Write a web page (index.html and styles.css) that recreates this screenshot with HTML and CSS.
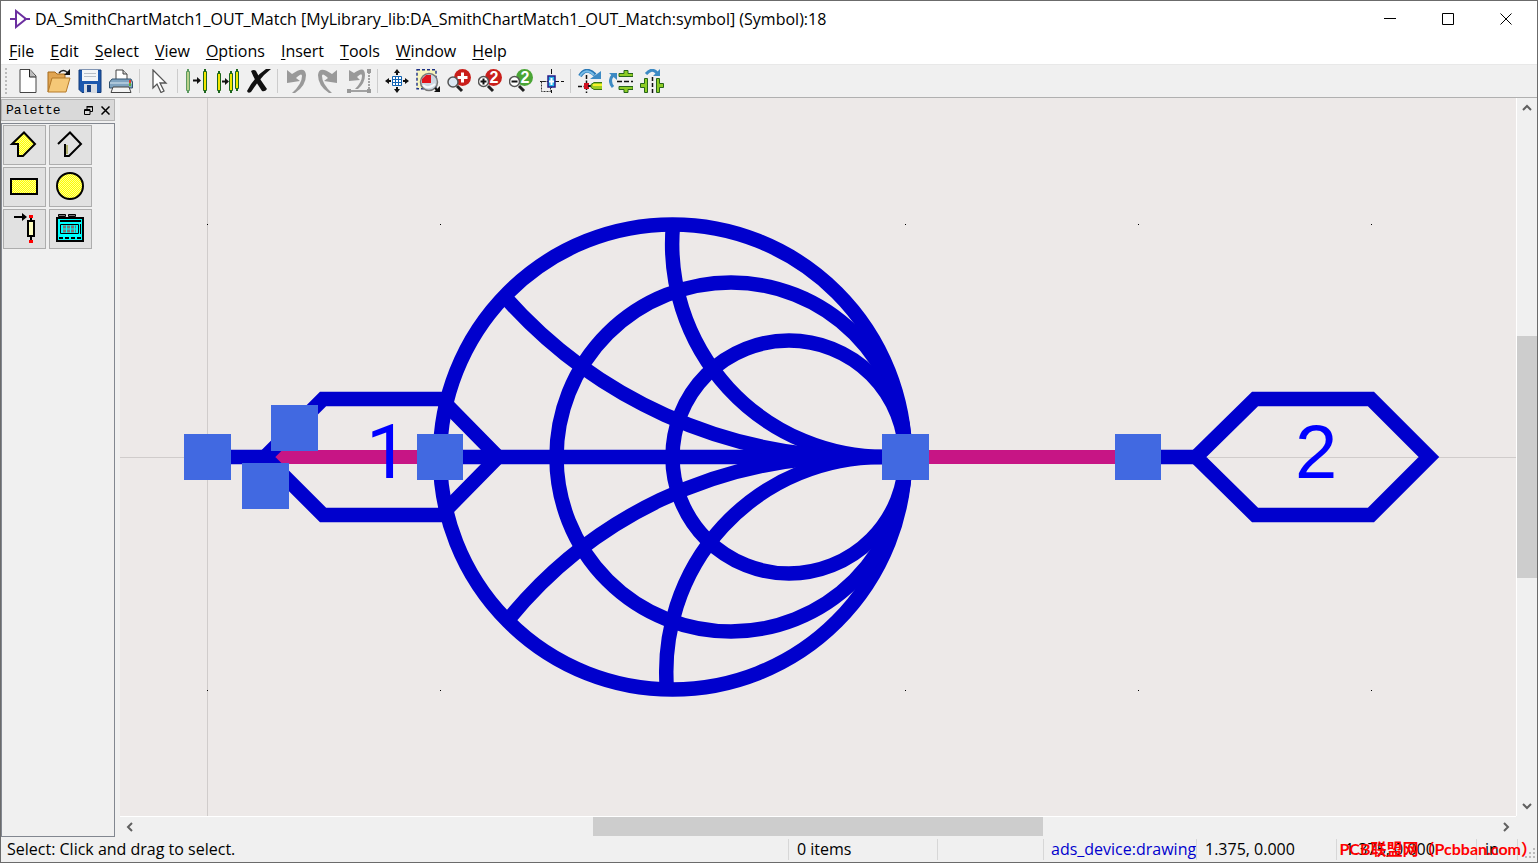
FILE: index.html
```
<!DOCTYPE html>
<html lang="en">
<head>
    <meta charset="UTF-8">
    <meta name="viewport" content="width=device-width, initial-scale=1.0">

    <title>DA_SmithChartMatch1_OUT_Match (Symbol)</title>

    <link rel="stylesheet" href="styles.css">
</head>
<body>

    <header class="title-bar">
        <svg class="app-icon" viewBox="0 0 20 20" width="20" height="20">
            <path d="M0 10h6M14 10h6M6 2v16L16 10Z" fill="none" stroke="#6b2fa0" stroke-width="2"/>
        </svg>
        <h1 class="title">DA_SmithChartMatch1_OUT_Match [MyLibrary_lib:DA_SmithChartMatch1_OUT_Match:symbol] (Symbol):18</h1>
        <div class="window-buttons">
            <button aria-label="Minimize"><svg viewBox="0 0 12 12" width="12" height="12"><path d="M0 5.5h12" stroke="#000"/></svg></button>
            <button aria-label="Maximize"><svg viewBox="0 0 12 12" width="12" height="12"><path d="M.5 .5h11v11H.5Z" fill="none" stroke="#000"/></svg></button>
            <button aria-label="Close"><svg viewBox="0 0 12 12" width="12" height="12"><path d="M.5 .5l11 11M11.5 .5l-11 11" stroke="#000"/></svg></button>
        </div>
    </header>

    <nav class="menu-bar">
        <button><u>F</u>ile</button>
        <button><u>E</u>dit</button>
        <button><u>S</u>elect</button>
        <button><u>V</u>iew</button>
        <button><u>O</u>ptions</button>
        <button><u>I</u>nsert</button>
        <button><u>T</u>ools</button>
        <button><u>W</u>indow</button>
        <button><u>H</u>elp</button>
    </nav>

    <div class="toolbar">
        <span class="grip"></span>
        <button aria-label="New">
            <svg viewBox="0 0 24 24"><path d="M4 .5h10l6 6.500V23.500H4Z" fill="#fff" stroke="#444"/><path d="M13.500 .5V8H20" fill="#bbb" stroke="#222"/></svg>
        </button>
        <button aria-label="Open">
            <svg viewBox="0 0 24 24"><path d="M1 23V3h7l2 2h8v4" fill="#e0a552" stroke="#a56a1c"/><path d="M1 23 5 9h18l-4 14Z" fill="#f5c877" stroke="#b57a2a"/><path d="M12 4q4-5 9 0" fill="none" stroke="#222" stroke-width="1.500"/><path d="M17 6h6V0Z" fill="#111"/></svg>
        </button>
        <button aria-label="Save">
            <svg viewBox="0 0 24 24"><path d="M1 1h22v22.500H4l-3-3Z" fill="#1c58ae" stroke="#123a78"/><path d="M4 1h16v11H4Z" fill="#f4f6f8"/><path d="M6 4.500h12M6 7.500h12" stroke="#b9c0c8"/><path d="M6 15h13v9H6Z" fill="#d6dbe2"/><path d="M9 16h4v7H9Z" fill="#173f82"/></svg>
        </button>
        <button aria-label="Print">
            <svg viewBox="0 0 24 24"><path d="M7 11V1h7l4 4v6" fill="#fff" stroke="#444"/><path d="M14 1v4h4" fill="#ccc" stroke="#444"/><path d="M3 10h19l1.500 3v6H.5v-6Z" fill="#7fa3c0" stroke="#33536e"/><path d="M1 14h22" stroke="#dce9f2"/><path d="M4 18h16l2 5.500H2Z" fill="#f3f3f3" stroke="#444"/><path d="M21 11v3" stroke="#d94030" stroke-width="2"/><path d="M21 14v3" stroke="#5eb030" stroke-width="2"/></svg>
        </button>
        <span class="separator"></span>
        <button aria-label="Select">
            <svg viewBox="0 0 24 24"><path d="M6 1v18l4-4 4 8.500 3-1.500-4-8h6Z" fill="#fff" stroke="#555" stroke-width="1.300"/></svg>
        </button>
        <span class="separator"></span>
        <button aria-label="Move">
            <svg viewBox="0 0 24 24"><path d="M3 0v24" stroke="#5c9a60" stroke-width="2"/><path d="M20 0v24" stroke="#1c661c" stroke-width="2"/><path d="M1.500 2.500h3v19h-3Z" fill="#b9cf88" stroke="#5c9a60"/><path d="M18.500 2.500h3v19h-3Z" fill="#f2e600" stroke="#1c661c"/><path d="M8 11.500h5" stroke="#111" stroke-width="2"/><path d="M12 8v7l4-3.500Z" fill="#111"/></svg>
        </button>
        <button aria-label="Copy">
            <svg viewBox="0 0 24 24"><path d="M3 2v22M15 2v22M21 0v22" stroke="#1c661c" stroke-width="2"/><path d="M1.500 4.500h3v17h-3ZM13.500 4.500h3v17h-3ZM19.500 2.500h3v17h-3Z" fill="#f2e600" stroke="#1c661c"/><path d="M6 12.500h4" stroke="#111" stroke-width="2"/><path d="M9 9v7l4-3.500Z" fill="#111"/></svg>
        </button>
        <button aria-label="Delete">
            <svg viewBox="0 0 24 24"><path d="M4 2q3-2 5 0 4 9 11 18-2 3-5 2Q8 12 4 2Z" fill="#111"/><path d="M24 0q-8 6-13 13L4 23q-3 2-4-1Q7 8 19 0Z" fill="#111"/></svg>
        </button>
        <span class="separator"></span>
        <button aria-label="Undo">
            <svg viewBox="0 0 24 24"><path d="M7 5Q20-4 21 6q0 11-11 18h-3q10-9 10-17 0-4-6 2l4 3-13 2V1Z" fill="#999"/></svg>
        </button>
        <button aria-label="Redo">
            <svg viewBox="0 0 24 24"><path d="M16 5Q3-4 2 6q0 11 11 18h3Q6 15 6 7q0-4 6 2l-4 3 13 2V1Z" fill="#999"/></svg>
        </button>
        <button aria-label="Undo vertex">
            <svg viewBox="0 0 24 24"><path d="M7 4Q18-4 18 6q0 8-7 14H8q7-7 7-13 0-4-5 1l3 3-11 1V1Z" fill="#999"/><path d="M22 3v18" stroke="#888" stroke-width="1.500" stroke-dasharray="2 1"/><path d="M2 22h20" stroke="#888" stroke-width="1.500"/><path d="M0 20h4v4H0ZM20 20h4v4h-4ZM20 0h4v4h-4Z" fill="#999"/></svg>
        </button>
        <span class="separator"></span>
        <button aria-label="View all">
            <svg viewBox="0 0 24 24"><path d="M7.500 7.500h9v9h-9ZM10.500 7.500v9M13.500 7.500v9M7.500 10.500h9M7.500 13.500h9" fill="#fff" stroke="#1264b4"/><path d="M12 6V2M12 18v4M6 12H2M18 12h4" stroke="#111" stroke-width="2"/><path d="M9 4h6l-3-4ZM9 20h6l-3 4ZM4 9v6l-4-3ZM20 9v6l4-3Z" fill="#111"/></svg>
        </button>
        <button aria-label="Zoom area">
            <svg viewBox="0 0 24 24"><path d="M1 .7h19v19H1Z" fill="#f7f5bd" stroke="#1b2f85" stroke-width="1.400" stroke-dasharray="3 2"/><circle cx="13" cy="13" r="8.500" fill="#ccd6e2" stroke="#777" stroke-width="1.500"/><path d="M6 14V10l4-4h5v8Z" fill="#e0141c"/><path d="M7 16q5 5 12-1" fill="none" stroke="#f6f9fc" stroke-width="2"/><path d="M19 19l3 3" stroke="#111" stroke-width="2"/><path d="M18 23h6v-6Z" fill="#111"/></svg>
        </button>
        <button aria-label="Zoom in">
            <svg viewBox="0 0 24 24"><circle cx="15.500" cy="8.500" r="8.500" fill="#c91f1b"/><path d="M15.500 3.500v10M10.500 8.500h10" stroke="#fff" stroke-width="3"/><circle cx="6" cy="13" r="5" fill="#dce8f3" stroke="#555" stroke-width="1.500"/><path d="M10 17l5 5" stroke="#222" stroke-width="3"/></svg>
        </button>
        <button aria-label="Zoom in by 2">
            <svg viewBox="0 0 24 24"><circle cx="15.500" cy="8.500" r="8.500" fill="#c91f1b"/><text x="16" y="14" class="zoom-number">2</text><circle cx="5.500" cy="12.500" r="5" fill="#fff" stroke="#555" stroke-width="1.500"/><path d="M5.500 9.500v6M2.500 12.500h6" stroke="#111" stroke-width="2"/><path d="M10 17l5 5" stroke="#222" stroke-width="3"/></svg>
        </button>
        <button aria-label="Zoom out by 2">
            <svg viewBox="0 0 24 24"><circle cx="15.500" cy="8.500" r="8.500" fill="#4aa536"/><text x="16" y="14" class="zoom-number">2</text><circle cx="5.500" cy="12.500" r="5" fill="#fff" stroke="#555" stroke-width="1.500"/><path d="M2.500 12.500h6" stroke="#111" stroke-width="2"/><path d="M10 17l5 5" stroke="#222" stroke-width="3"/></svg>
        </button>
        <button aria-label="Pan to point">
            <svg viewBox="0 0 24 24"><path d="M11.500 0v24M0 12.500h24" stroke="#111" stroke-dasharray="5 2"/><path d="M1.500 12.500h9v10h-9Z" fill="none" stroke="#333" stroke-dasharray="2 1"/><path d="M8 7h7v11H8Z" fill="#27b5ea" stroke="#281c87" stroke-width="1.500"/><path d="M11.500 9v7M9 12.500h5" stroke="#fff" stroke-width="2"/></svg>
        </button>
        <span class="separator"></span>
        <button aria-label="Rotate">
            <svg viewBox="0 0 24 24"><path d="M2 7Q8-3 17 6" fill="none" stroke="#2877b5" stroke-width="4"/><path d="M2 7Q8-2 16 6" fill="none" stroke="#76bce8" stroke-width="2"/><path d="M12 10h11V2Z" fill="#3d8ac4"/><path d="M8.500 6v18M0 17.500h7" stroke="#111" stroke-width="1.500" stroke-dasharray="4 1.500"/><path d="M6 14h5v6H6Z" fill="#d01020"/><path d="M10 17h4" stroke="#111" stroke-width="2"/><path d="M24 13.500h-8l-3 2v3l3 2h8" fill="#9bcc20" stroke="#397312"/><path d="M15 16h9" stroke="#f6ef29" stroke-width="2"/></svg>
        </button>
        <button aria-label="Mirror about X">
            <svg viewBox="0 0 24 24"><path d="M4 18Q-1 12 4 6" fill="none" stroke="#3d8ac4" stroke-width="3"/><path d="M0 4h8v7Z" fill="#3d8ac4"/><path d="M10 7.500v-3h5v-3h4v3h5v3ZM10 17.500h14v3h-5v3h-4v-3h-5Z" fill="#8dcc25" stroke="#26651a"/><path d="M8 12.500h16" stroke="#111" stroke-width="1.500" stroke-dasharray="5 2"/></svg>
        </button>
        <button aria-label="Mirror about Y">
            <svg viewBox="0 0 24 24"><path d="M6 5Q12-2 17 4" fill="none" stroke="#3d8ac4" stroke-width="3"/><path d="M13 7h7V0Z" fill="#3d8ac4"/><path d="M7.500 9.500v14h-3v-5h-4v-4h4v-5ZM16.500 9.500v14h3v-5h4v-4h-4v-5Z" fill="#8dcc25" stroke="#26651a"/><path d="M12.500 8v16" stroke="#111" stroke-width="1.500" stroke-dasharray="4 2"/></svg>
        </button>
    </div>

    <main class="workspace">
        <aside class="palette">
            <div class="palette-header">
                <h2>Palette</h2>
                <button aria-label="Float"><svg viewBox="0 0 9 9" width="9" height="9"><path d="M3 .5h5.500v5H6M3 0v3M3 1h6" fill="none" stroke="#000"/><path d="M.5 3.500h5.500v5H.5ZM0 4.500h6" fill="none" stroke="#000"/></svg></button>
                <button aria-label="Close palette"><svg viewBox="0 0 9 9" width="9" height="9"><path d="M.5 .5l8 8M8.500 .5l-8 8" stroke="#000" stroke-width="1.500"/></svg></button>
            </div>
            <div class="palette-body">
                <button aria-label="Polygon">
                    <svg viewBox="0 0 30 30">
                        <defs>
                            <pattern id="dither" width="2" height="2" patternUnits="userSpaceOnUse">
                                <path d="M0 0h2v2H0Z" fill="#ffff00"/>
                                <path d="M0 0h1v1H0ZM1 1h1v1H1Z" fill="#ffff90"/>
                            </pattern>
                        </defs>
                        <path d="M3 15 15 3.500 26 15 14 27H9V15Z" fill="url(#dither)" stroke="#000" stroke-width="2"/>
                    </svg>
                </button>
                <button aria-label="Polyline"><svg viewBox="0 0 30 30"><path d="M3 15 15 3.500 26 15 14 27H10V15" fill="none" stroke="#000" stroke-width="2"/><path d="M12 16v9" stroke="#808000"/></svg></button>
                <button aria-label="Rectangle"><svg viewBox="0 0 30 30"><path d="M2 8h26v15H2Z" fill="url(#dither)" stroke="#000" stroke-width="2"/></svg></button>
                <button aria-label="Circle"><svg viewBox="0 0 30 30"><circle cx="15" cy="15" r="13" fill="url(#dither)" stroke="#000" stroke-width="2"/></svg></button>
                <button aria-label="Pin"><svg viewBox="0 0 30 30"><path d="M5 4h11" stroke="#000" stroke-width="2"/><path d="M13 0v8l5-4Z" fill="#000"/><path d="M22 4v24" stroke="#000" stroke-width="2"/><path d="M19 8h6v15h-6Z" fill="#ffffc0" stroke="#000" stroke-width="2"/><path d="M20 2h4v3h-4ZM20 27h4v3h-4Z" fill="#f00"/></svg></button>
                <button aria-label="Symbol generator"><svg viewBox="0 0 30 30"><path d="M3.500 1.500h7v2h-7ZM13.500 1.500h7v2h-7Z" fill="#777" stroke="#000"/><path d="M2 5h26v23H2Z" fill="#00ffff" stroke="#000" stroke-width="2"/><path d="M5 8h21M4 25h4M10 25h4M16 25h4M22 25h4" stroke="#000" stroke-width="2"/><path d="M5.500 11.500h18v9h-18ZM25.500 11v10" fill="none" stroke="#000"/><path d="M8 14h13M8 18h13" stroke="#777" stroke-width="3" stroke-dasharray="3 1"/></svg></button>
            </div>
        </aside>

        <section class="editor">
            <!-- Symbol drawing -->
            <svg class="canvas" viewBox="120 98 1396 718">
                <path class="axis" d="M207.500 98V816M120 457.500H1516"/>
                <path class="grid-dots" d="M207 224.500h1M440 224.500h1M905 224.500h1M1138 224.500h1M1371 224.500h1M207 690.500h1M440 690.500h1M905 690.500h1M1138 690.500h1M1371 690.500h1"/>

                <path class="wire" d="M265 457H440M905 457h233"/>

                <g class="shape">
                    <path d="M207 457H265M440 457H905M1138 457h58"/>
                    <circle cx="672.500" cy="457" r="232.500"/>
                    <circle cx="731" cy="457" r="174.500"/>
                    <circle cx="789" cy="457" r="116.500"/>
                    <path d="M673 225A213 213 0 0 0 886 457"/>
                    <path d="M505 297A475 475 0 0 0 860 457"/>
                    <path d="M508 620A440 440 0 0 1 850 457"/>
                    <path d="M667 690A215 215 0 0 1 882 457"/>
                    <path d="M265 457 323 399H441L498 457 441 515H323Z"/>
                    <path d="M1196 457 1255 399H1371L1429 457 1371 515H1255Z"/>
                </g>

                <text class="pin-number pin-one" x="366" y="478">1</text>
                <text class="pin-number" x="1295" y="478">2</text>

                <g class="handle">
                    <rect x="184" y="434" width="47" height="46"/>
                    <rect x="271" y="405" width="47" height="46"/>
                    <rect x="242" y="463" width="47" height="46"/>
                    <rect x="417" y="434" width="46" height="46"/>
                    <rect x="882" y="434" width="47" height="46"/>
                    <rect x="1115" y="434" width="46" height="46"/>
                </g>
            </svg>

            <div class="scroll-v">
                <button aria-label="Scroll up"><svg viewBox="0 0 10 10" width="10" height="10"><path d="M1 7l4-4 4 4"/></svg></button>
                <div class="track"><span class="before"></span><span class="thumb"></span><span class="after"></span></div>
                <button aria-label="Scroll down"><svg viewBox="0 0 10 10" width="10" height="10"><path d="M1 3l4 4 4-4"/></svg></button>
            </div>

            <div class="scroll-h">
                <button aria-label="Scroll left"><svg viewBox="0 0 10 10" width="10" height="10"><path d="M7 1L3 5l4 4"/></svg></button>
                <div class="track"><span class="before"></span><span class="thumb"></span><span class="after"></span></div>
                <button aria-label="Scroll right"><svg viewBox="0 0 10 10" width="10" height="10"><path d="M3 1l4 4-4 4"/></svg></button>
            </div>
        </section>
    </main>

    <footer class="status-bar">
        <span class="message">Select: Click and drag to select.</span>
        <span class="items">0 items</span>
        <span class="blank"></span>
        <span class="layer">ads_device:drawing</span>
        <span class="coords">1.375, 0.000</span>
        <span class="coords">1.375, 0.000</span>
        <span class="units">in</span>
        <span class="size-grip"><svg viewBox="0 0 12 12" width="12" height="12"><path d="M9 1h2v2H9ZM5 5h2v2H5ZM9 5h2v2H9ZM1 9h2v2H1ZM5 9h2v2H5ZM9 9h2v2H9Z" fill="#bbb"/></svg></span>
        <strong class="watermark">PCB联盟网（Pcbban.com）</strong>
    </footer>

</body>
</html>
```
FILE: styles.css
```
* {
    box-sizing: border-box;
}
body {
    margin: 0;
    height: 100vh;
    display: flex;
    flex-direction: column;
    overflow: hidden;
    border: 1px solid #6b6b6b;
    background: #f0f0f0;
    color: #000;
    font-family: "Open Sans", "Noto Sans CJK SC", sans-serif;
    font-size: 16px;
}
button {
    display: flex;
    align-items: center;
    justify-content: center;
    padding: 0;
    border: none;
    background: none;
    color: inherit;
    font: inherit;
}

/* Title bar */
.title-bar {
    display: flex;
    align-items: center;
    height: 36px;
    padding: 0 2px 0 9px;
    background: white;
}
.title {
    flex: 1;
    margin: 0 0 0 5px;
    font-size: 16px;
    font-weight: normal;
    white-space: nowrap;
}
.window-buttons {
    display: flex;
}
.window-buttons button {
    width: 58px;
    height: 36px;
}

/* Menu bar */
.menu-bar {
    display: flex;
    gap: 16px;
    height: 28px;
    padding-left: 8px;
    background: white;
    border-bottom: 1px solid #e8e8e8;
}
.menu-bar u {
    text-underline-offset: 2px;
}

/* Toolbar */
.toolbar {
    display: flex;
    align-items: center;
    height: 33px;
    border-bottom: 1px solid #b0b0b0;
}
.toolbar button {
    width: 31px;
    height: 30px;
}
.toolbar svg {
    width: 24px;
    height: 24px;
}
.grip {
    width: 3px;
    height: 26px;
    margin: 0 4px;
    border-left: 2px dotted #bbb;
}
.separator {
    width: 1px;
    height: 24px;
    margin: 0 3px;
    background: #ccc;
}
.zoom-number {
    fill: white;
    font-family: "Liberation Sans", sans-serif;
    font-size: 16px;
    font-weight: bold;
    text-anchor: middle;
}

/* Palette */
.workspace {
    flex: 1;
    display: flex;
    min-height: 0;
}
.palette {
    display: flex;
    flex-direction: column;
    gap: 2px;
    width: 114px;
    margin-right: 5px;
    padding-top: 1px;
}
.palette-header {
    display: flex;
    align-items: center;
    gap: 8px;
    height: 22px;
    padding: 0 4px;
    background: #d9d9d9;
    border: 1px solid #b5b5b5;
}
.palette-header h2 {
    flex: 1;
    margin: 0;
    font-family: "Liberation Mono", monospace;
    font-size: 13px;
    font-weight: normal;
}
.palette-body {
    flex: 1;
    display: grid;
    grid-template-columns: 43px 43px;
    grid-auto-rows: 40px;
    gap: 2px 3px;
    padding: 1px;
    border: 1px solid #828790;
}
.palette-body button {
    padding: 0 1px 2px 0;
    background: #e1e1e1;
    border: 1px solid #adadad;
}
.palette-body svg {
    width: 30px;
    height: 30px;
}

/* Editor */
.editor {
    flex: 1;
    display: grid;
    grid-template-columns: 1fr 21px;
    grid-template-rows: 1fr 21px;
    min-width: 0;
}
.canvas {
    width: 100%;
    height: 100%;
    min-height: 0;
    background: #ede9e8;
}
.axis {
    stroke: #d0cccb;
}
.grid-dots {
    stroke: #000;
}
.wire {
    stroke: #c71585;
    stroke-width: 14;
}
.shape {
    fill: none;
    stroke: #0000cd;
    stroke-width: 14.5;
}
.pin-number {
    fill: #0000ff;
    font-family: "Liberation Sans", sans-serif;
    font-size: 76px;
}
.pin-one {
    font-family: Roboto, sans-serif;
}
.handle {
    fill: #4169e1;
}

/* Scroll bars */
.scroll-v,
.scroll-h,
.track {
    display: flex;
}
.scroll-v,
.scroll-v .track {
    flex-direction: column;
}
.scroll-v {
    border-left: 1px solid white;
}
.scroll-h {
    border-top: 1px solid white;
}
.scroll-v button,
.scroll-h button {
    width: 20px;
    height: 20px;
}
.scroll-v path,
.scroll-h path {
    fill: none;
    stroke: #606060;
    stroke-width: 2;
}
.track {
    flex: 1;
}
.thumb {
    background: #cdcdcd;
}
.scroll-v .before {
    flex: 218;
}
.scroll-v .thumb {
    flex: 242;
}
.scroll-v .after {
    flex: 218;
}
.scroll-h .before {
    flex: 453;
}
.scroll-h .thumb {
    flex: 450;
    margin-bottom: 1px;
}
.scroll-h .after {
    flex: 453;
}

/* Status bar */
.status-bar {
    position: relative;
    display: flex;
    align-items: center;
    height: 25px;
}
.status-bar span {
    height: 21px;
    padding-left: 8px;
    border-left: 1px solid #d7d7d7;
    line-height: 21px;
    white-space: nowrap;
}
.status-bar .message {
    flex: 1;
    padding-left: 6px;
    border-left: none;
}
.items {
    width: 149px;
}
.blank {
    width: 106px;
}
.status-bar .layer {
    width: 153px;
    padding-left: 7px;
    color: #0000cd;
}
.coords {
    width: 140px;
}
.units {
    width: 41px;
}
.status-bar .size-grip {
    width: 20px;
    padding: 8px 0 0 6px;
    line-height: 12px;
}
/* Site mark printed over the status bar */
.watermark {
    position: absolute;
    right: 0;
    bottom: 0;
    color: #ff0000;
    font-family: Lato, "Noto Sans CJK SC", sans-serif;
    font-size: 16px;
    line-height: 26px;
    white-space: nowrap;
}
```
